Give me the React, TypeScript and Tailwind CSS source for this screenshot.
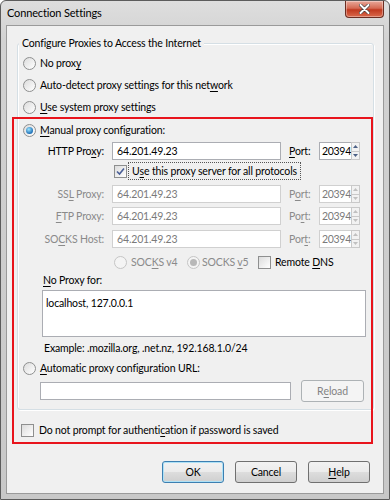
import React from "react";

const F = "font-['Lato',sans-serif]";

function U({ children }: { children: React.ReactNode }) {
    return <span className="underline underline-offset-[2px]">{children}</span>;
}

function Radio({ checked, disabled }: { checked?: boolean; disabled?: boolean }) {
    return (
        <span
            className={`relative flex h-[13px] w-[13px] shrink-0 items-center justify-center rounded-full border ${disabled ? "border-[#c5c5c5] bg-[#f4f4f4]" : "border-[#8e8f8f] bg-[linear-gradient(135deg,#dcdcdc,#ffffff)]"}`}
        >
            {checked && (
                <span
                    className={`h-[7px] w-[7px] rounded-full ${disabled ? "bg-[#b8b8b8]" : "bg-[radial-gradient(circle_at_40%_35%,#9ee6ff,#1d6fb6_70%)]"}`}
                />
            )}
        </span>
    );
}

function Check({ checked }: { checked?: boolean }) {
    return (
        <span className="flex h-[13px] w-[13px] shrink-0 items-center justify-center border border-[#8e8f8f] bg-[linear-gradient(135deg,#dcdcdc,#ffffff)]">
            {checked && (
                <svg width="9" height="9" viewBox="0 0 9 9">
                    <path d="M1 4.5 L3.5 7 L8 1.5" fill="none" stroke="#4a5f97" strokeWidth="1.6" />
                </svg>
            )}
        </span>
    );
}

function Spinner({ disabled }: { disabled?: boolean }) {
    const c = disabled ? "#c0c0c0" : "#4d6185";
    return (
        <div className="flex h-[18px] w-[9px] flex-col">
            <div className="flex flex-1 items-center justify-center border border-[#c9c9c9] bg-[#f2f2f2]">
                <svg width="5" height="3" viewBox="0 0 5 3">
                    <path d="M0 3 L2.5 0 L5 3Z" fill={c} />
                </svg>
            </div>
            <div className="flex flex-1 items-center justify-center border border-t-0 border-[#c9c9c9] bg-[#f2f2f2]">
                <svg width="5" height="3" viewBox="0 0 5 3">
                    <path d="M0 0 L2.5 3 L5 0Z" fill={c} />
                </svg>
            </div>
        </div>
    );
}

function ProxyRow({
    label,
    disabled,
    port,
    mt,
}: {
    label: React.ReactNode;
    disabled?: boolean;
    port: React.ReactNode;
    mt: string;
}) {
    const txt = disabled ? "text-[#8a8a8a]" : "text-black";
    return (
        <div className={`flex h-[18px] items-center ${mt}`}>
            <div className={`w-[81px] text-right ${txt}`}>{label}</div>
            <div
                className={`ml-[8px] flex h-[18px] w-[169px] items-center border px-[4px] ${disabled ? "border-[#d0d0d0] bg-white text-[#7a7a7a]" : "border-[#abadb3] bg-white text-black"}`}
            >
                64.201.49.23
            </div>
            <div className={`ml-[8px] w-[30px] ${txt}`}>{port}</div>
            <div
                className={`flex h-[18px] w-[32px] items-center overflow-hidden border border-r-0 pl-[2px] tracking-[-0.3px] ${disabled ? "border-[#d0d0d0] bg-white text-[#7a7a7a]" : "border-[#abadb3] bg-white text-black"}`}
            >
                20394
            </div>
            <Spinner disabled={disabled} />
        </div>
    );
}

function Btn({ children, primary, disabled, w }: { children: React.ReactNode; primary?: boolean; disabled?: boolean; w: string }) {
    return (
        <div
            className={`flex h-[22px] ${w} items-center justify-center rounded-[3px] border ${primary ? "border-[#3c7fb1] shadow-[inset_0_0_0_1px_#aee1f6]" : disabled ? "border-[#adb2b5]" : "border-[#707070]"} ${disabled ? "bg-[#f4f4f4] text-[#838383]" : "bg-[linear-gradient(#f2f2f2_0%,#ebebeb_50%,#dddddd_51%,#cfcfcf_100%)] text-black"}`}
        >
            {children}
        </div>
    );
}

export default function App() {
    return (
        <div className={`relative h-[500px] w-[390px] overflow-hidden bg-white text-[10.5px] leading-none tracking-[-0.15px] ${F}`}>
            <div className="flex h-[500px] w-[390px] flex-col rounded-t-[6px] border border-[#5c5c5c] bg-[linear-gradient(#dedede,#d2d2d2_40px,#c8c8c8)]">
                {/* title bar */}
                <div className="flex h-[24px] items-start">
                    <div className="mt-[6px] pl-[6px] text-[11px] text-black">Connection Settings</div>
                    <div className="ml-auto mr-[5px] flex h-[17px] w-[39px] items-center justify-center rounded-b-[4px] border border-t-0 border-[#6b2d22] bg-[linear-gradient(#e9a99a,#d56a53_45%,#c0391f_55%,#d9694c)] shadow-[inset_0_0_0_1px_rgba(255,255,255,0.35)]">
                        <svg width="11" height="10" viewBox="0 0 11 10">
                            <path d="M1.5 1 L9.5 9 M9.5 1 L1.5 9" stroke="#3a3a3a" strokeWidth="3.2" strokeLinecap="round" />
                            <path d="M1.5 1 L9.5 9 M9.5 1 L1.5 9" stroke="#ffffff" strokeWidth="2" strokeLinecap="round" />
                        </svg>
                    </div>
                </div>
                {/* client area */}
                <div className="mx-[5px] mb-[5px] flex flex-1 flex-col border border-[#9a9a9a] bg-[#f0f0f0] text-black">
                    {/* group box */}
                    <div className="relative ml-[10px] mr-[9px] mt-[17px] h-[367px] rounded-[3px] border border-[#d5dfe5] shadow-[inset_1px_1px_0_#ffffff,1px_1px_0_#ffffff]">
                        <div className="absolute left-[1px] top-[-6px] bg-[#f0f0f0] px-[3px]">
                            Configure Proxies to Access the Internet
                        </div>
                        <div className="flex flex-col pl-[5px]">
                            <div className="mt-[10px] flex h-[18px] items-center gap-[4px]">
                                <Radio />
                                <span>
                                    No prox<U>y</U>
                                </span>
                            </div>
                            <div className="mt-[4px] flex h-[18px] items-center gap-[4px]">
                                <Radio />
                                <span>
                                    Auto-detect proxy settings for this net<U>w</U>ork
                                </span>
                            </div>
                            <div className="mt-[4px] flex h-[18px] items-center gap-[4px]">
                                <Radio />
                                <span>
                                    <U>U</U>se system proxy settings
                                </span>
                            </div>
                            <div className="mt-[5px] flex h-[18px] items-center gap-[4px]">
                                <Radio checked />
                                <span>
                                    <U>M</U>anual proxy configuration:
                                </span>
                            </div>

                            <ProxyRow
                                mt="mt-[3px]"
                                label={
                                    <>
                                        HTTP Pro<U>x</U>y:
                                    </>
                                }
                                port={
                                    <>
                                        <U>P</U>ort:
                                    </>
                                }
                            />
                            <div className="mt-[2px] flex h-[18px] items-center pl-[91px]">
                                <Check checked />
                                <span className="ml-[1px] flex h-[18px] items-center border border-dotted border-[#555] px-[3px]">
                                    U<U>s</U>e this proxy server for all protocols
                                </span>
                            </div>
                            <ProxyRow
                                mt="mt-[5px]"
                                disabled
                                label={
                                    <>
                                        SS<U>L</U> Proxy:
                                    </>
                                }
                                port={
                                    <>
                                        P<U>o</U>rt:
                                    </>
                                }
                            />
                            <ProxyRow
                                mt="mt-[4px]"
                                disabled
                                label={
                                    <>
                                        <U>F</U>TP Proxy:
                                    </>
                                }
                                port={
                                    <>
                                        Po<U>r</U>t:
                                    </>
                                }
                            />
                            <ProxyRow
                                mt="mt-[5px]"
                                disabled
                                label={
                                    <>
                                        SO<U>C</U>KS Host:
                                    </>
                                }
                                port={
                                    <>
                                        Por<U>t</U>:
                                    </>
                                }
                            />
                            <div className="mt-[5px] flex h-[18px] items-center pl-[91px] text-[#8a8a8a]">
                                <div className="flex w-[73px] items-center gap-[4px]">
                                    <Radio disabled />
                                    <span>
                                        SOC<U>K</U>S v4
                                    </span>
                                </div>
                                <div className="flex w-[71px] items-center gap-[2px]">
                                    <Radio checked disabled />
                                    <span>
                                        SOCKS <U>v</U>5
                                    </span>
                                </div>
                                <div className="flex items-center gap-[4px] text-black">
                                    <Check />
                                    <span>
                                        Remote <U>D</U>NS
                                    </span>
                                </div>
                            </div>

                            <div className="ml-[20px] flex h-[18px] items-center">
                                <span>
                                    <U>N</U>o Proxy for:
                                </span>
                            </div>
                            <div className="ml-[19px] mt-[1px] h-[47px] w-[324px] border border-[#abadb3] bg-white px-[3px] pt-[7px]">
                                localhost, 127.0.0.1
                            </div>
                            <div className="ml-[21px] mt-[2px] flex h-[18px] items-center">
                                Example: .mozilla.org, .net.nz, 192.168.1.0/24
                            </div>
                            <div className="mt-[2px] flex h-[18px] items-center gap-[4px]">
                                <Radio />
                                <span>
                                    <U>A</U>utomatic proxy configuration URL:
                                </span>
                            </div>
                            <div className="ml-[17px] mt-[3px] flex h-[22px] items-center">
                                <div className="h-[18px] w-[251px] border border-[#abadb3] bg-white" />
                                <div className="ml-[10px]">
                                    <Btn disabled w="w-[63px]">
                                        R<U>e</U>load
                                    </Btn>
                                </div>
                            </div>
                        </div>
                    </div>

                    <div className="ml-[14px] mt-[11px] flex h-[18px] items-center gap-[5px]">
                        <Check />
                        <span>
                            Do not prompt for authenti<U>c</U>ation if password is saved
                        </span>
                    </div>

                    <div className="mr-[13px] mt-[22px] flex justify-end gap-[11px]">
                        <Btn primary w="w-[62px]">
                            OK
                        </Btn>
                        <Btn w="w-[62px]">Cancel</Btn>
                        <Btn w="w-[62px]">
                            <U>H</U>elp
                        </Btn>
                    </div>
                </div>
            </div>

            {/* red annotation */}
            <div className="pointer-events-none absolute left-[12px] top-[117px] h-[327px] w-[361px] border-2 border-[#e8141c]" />
        </div>
    );
}
